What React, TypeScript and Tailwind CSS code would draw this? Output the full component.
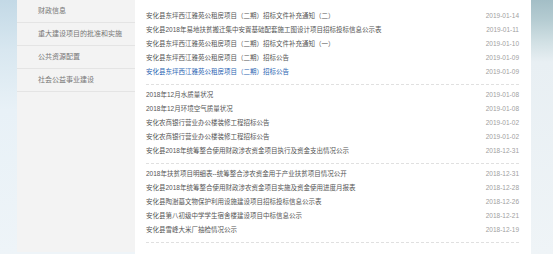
const menu = ['财政信息', '重大建设项目的批准和实施', '公共资源配置', '社会公益事业建设'];

type Item = { title: string; date: string; active?: boolean };

const groups: Item[][] = [
  [
    { title: '安化县东坪西江雅苑公租房项目（二期）招标文件补充通知（二）', date: '2019-01-14' },
    { title: '安化县2018年易地扶贫搬迁集中安置基础配套施工图设计项目招标投标信息公示表', date: '2019-01-11' },
    { title: '安化县东坪西江雅苑公租房项目（二期）招标文件补充通知（一）', date: '2019-01-10' },
    { title: '安化县东坪西江雅苑公租房项目（二期）招标公告', date: '2019-01-09' },
    { title: '安化县东坪西江雅苑公租房项目（二期）招标公告', date: '2019-01-09', active: true },
  ],
  [
    { title: '2018年12月水质量状况', date: '2019-01-08' },
    { title: '2018年12月环境空气质量状况', date: '2019-01-08' },
    { title: '安化农商银行营业办公楼装修工程招标公告', date: '2019-01-02' },
    { title: '安化农商银行营业办公楼装修工程招标公告', date: '2019-01-02' },
    { title: '安化县2018年统筹整合使用财政涉农资金项目执行及资金支出情况公示', date: '2018-12-31' },
  ],
  [
    { title: '2018年扶贫项目明细表--统筹整合涉农资金用于产业扶贫项目情况公开', date: '2018-12-31' },
    { title: '安化县2018年统筹整合使用财政涉农资金项目实施及资金使用进度月报表', date: '2018-12-28' },
    { title: '安化县陶澍墓文物保护利用设施建设项目招标投标信息公示表', date: '2018-12-26' },
    { title: '安化县第八初级中学学生宿舍楼建设项目中标信息公示', date: '2018-12-21' },
    { title: '安化县雪峰大米厂抽检情况公示', date: '2018-12-19' },
  ],
];

export default function App() {
  return (
    <div className="flex h-[254px] w-[553px] overflow-hidden font-['Liberation_Sans','Noto_Sans_CJK_SC',sans-serif] bg-[#eef4f8]">
      {/* left backdrop */}
      <div className="w-[17px] h-full bg-[linear-gradient(to_bottom,#c3d9e6_0px,#d8e7f0_50px,#e8f1f7_110px,#eef4f8_100%)]" />

      {/* sidebar */}
      <div className="w-[118px] h-[252px] bg-[#f3f3f3]">
        {menu.map((m) => (
          <div key={m} className="h-[23px] flex items-center pl-[21px] border-b border-[#e4e4e4] text-[7px] text-[#777]">
            {m}
          </div>
        ))}
      </div>

      {/* list */}
      <div className="w-[396px] h-full bg-white pl-[11px] pr-[12px] pt-[9px]">
        {groups.map((g, gi) => (
          <div key={gi} className={`${gi > 0 ? 'mt-[3px]' : ''} pb-[5px] border-b border-dashed border-[#e0e0e0]`}>
            {g.map((it, i) => (
              <div key={i} className="h-[14px] flex items-center justify-between text-[6.5px]">
                <span className={it.active ? 'text-[#2a64b2]' : 'text-[#555]'}>{it.title}</span>
                <span className="text-[#a0a0a0]">{it.date}</span>
              </div>
            ))}
          </div>
        ))}
      </div>

      {/* right backdrop */}
      <div className="flex-1 h-full bg-[linear-gradient(to_bottom,#a3bec6_0px,#b5ccd2_20px,#d1e0e4_42px,#e8eff3_62px,#eff4f7_100%)]" />
    </div>
  );
}
